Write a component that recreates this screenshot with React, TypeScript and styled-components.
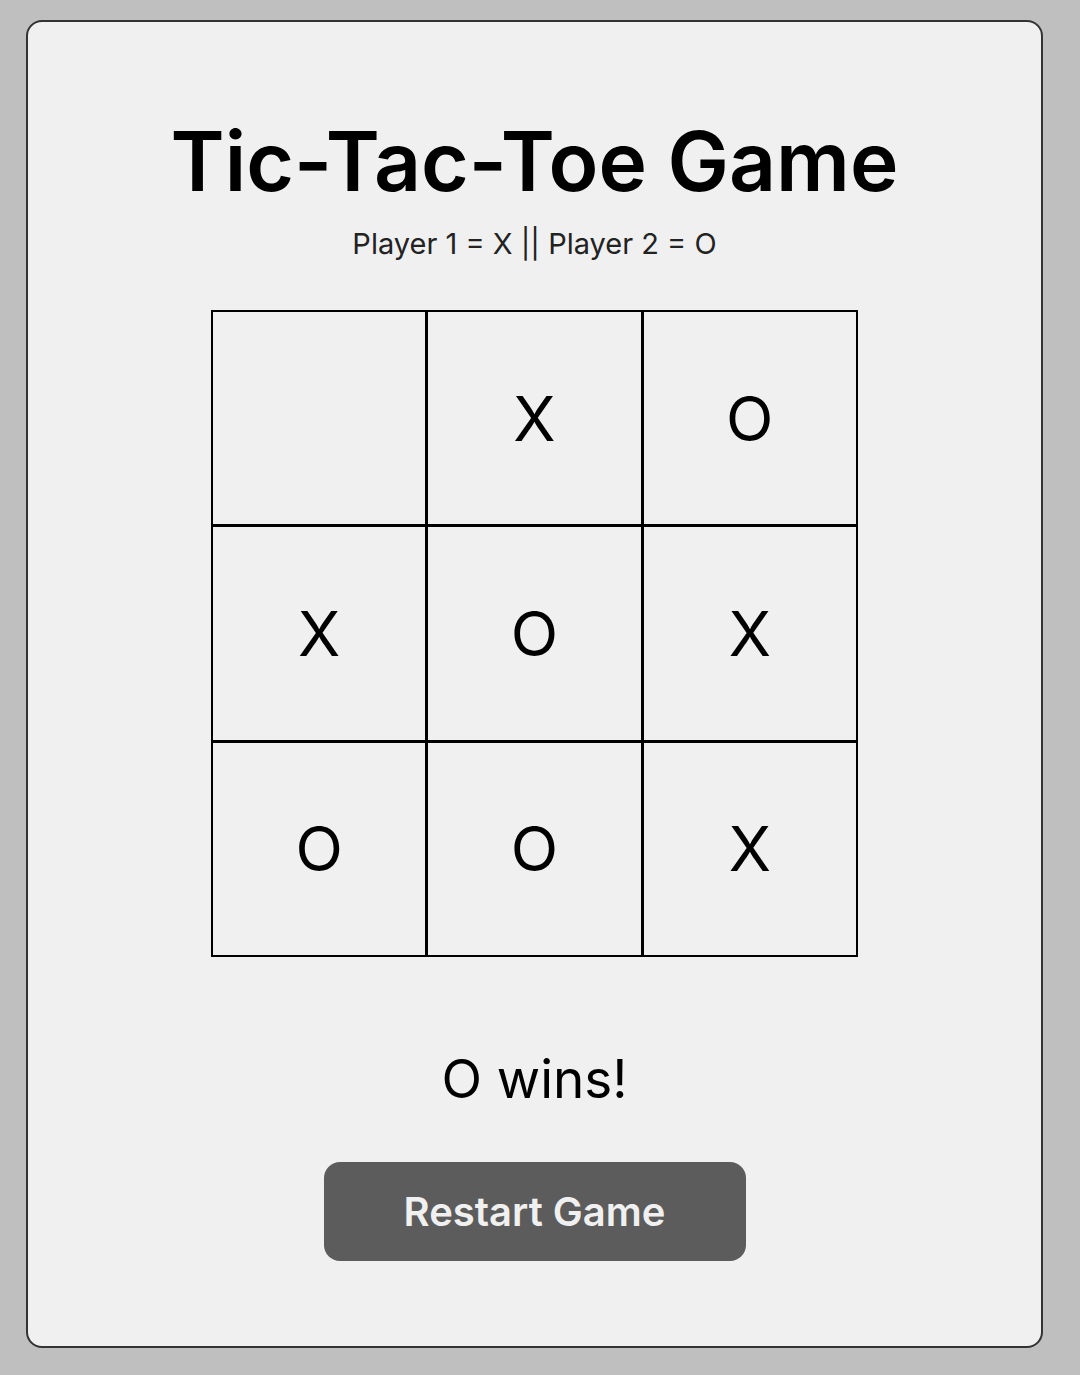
import { FC } from 'react'
import styled, { createGlobalStyle } from 'styled-components'

const GlobalStyle = createGlobalStyle`
  html, body {
    margin: 0;
    padding: 0;
    background: #bfbfbf;
  }
  body {
    font-family: Inter, "DejaVu Sans", sans-serif;
    color: #000;
  }
`

const Page = styled.div`
  width: 1080px;
  height: 1375px;
  padding: 20px 0 0 26px;
  box-sizing: border-box;
`

const Card = styled.main`
  width: 1017px;
  height: 1328px;
  box-sizing: border-box;
  background: #f0f0f0;
  border: 2px solid #333;
  border-radius: 16px;
  display: flex;
  flex-direction: column;
  align-items: center;
  padding-top: 94px;
`

const Title = styled.h1`
  margin: 0;
  font-size: 82px;
  font-weight: 600;
  line-height: 92px;
`

const Subtitle = styled.p`
  margin: 19px 0 0;
  font-size: 29px;
  line-height: 34px;
  color: #222;
`

const Board = styled.div`
  margin-top: 49px;
  display: grid;
  grid-template-columns: repeat(3, 212.3px);
  grid-template-rows: repeat(3, 212.3px);
  gap: 3px;
  background: #000;
  border: 2px solid #000;
`

const Cell = styled.button`
  border: none;
  background: #f0f0f0;
  padding: 0;
  font-family: inherit;
  font-size: 62px;
  font-weight: 400;
  color: #000;
  display: flex;
  align-items: center;
  justify-content: center;
`

const Status = styled.p`
  margin: 91px 0 0;
  font-size: 53px;
  line-height: 62px;
`

const RestartButton = styled.button`
  margin-top: 52px;
  width: 422px;
  height: 99px;
  border: none;
  border-radius: 16px;
  background: #5c5c5c;
  color: #f0f0f0;
  font-family: inherit;
  font-size: 40px;
  font-weight: 600;
`

const cells = ['', 'X', 'O', 'X', 'O', 'X', 'O', 'O', 'X']

const App: FC = () => (
  <Page>
    <GlobalStyle />
    <Card>
      <Title>Tic-Tac-Toe Game</Title>
      <Subtitle>Player 1 = X || Player 2 = O</Subtitle>
      <Board>
        {cells.map((v, i) => (
          <Cell key={i}>{v}</Cell>
        ))}
      </Board>
      <Status>O wins!</Status>
      <RestartButton>Restart Game</RestartButton>
    </Card>
  </Page>
)

export default App
